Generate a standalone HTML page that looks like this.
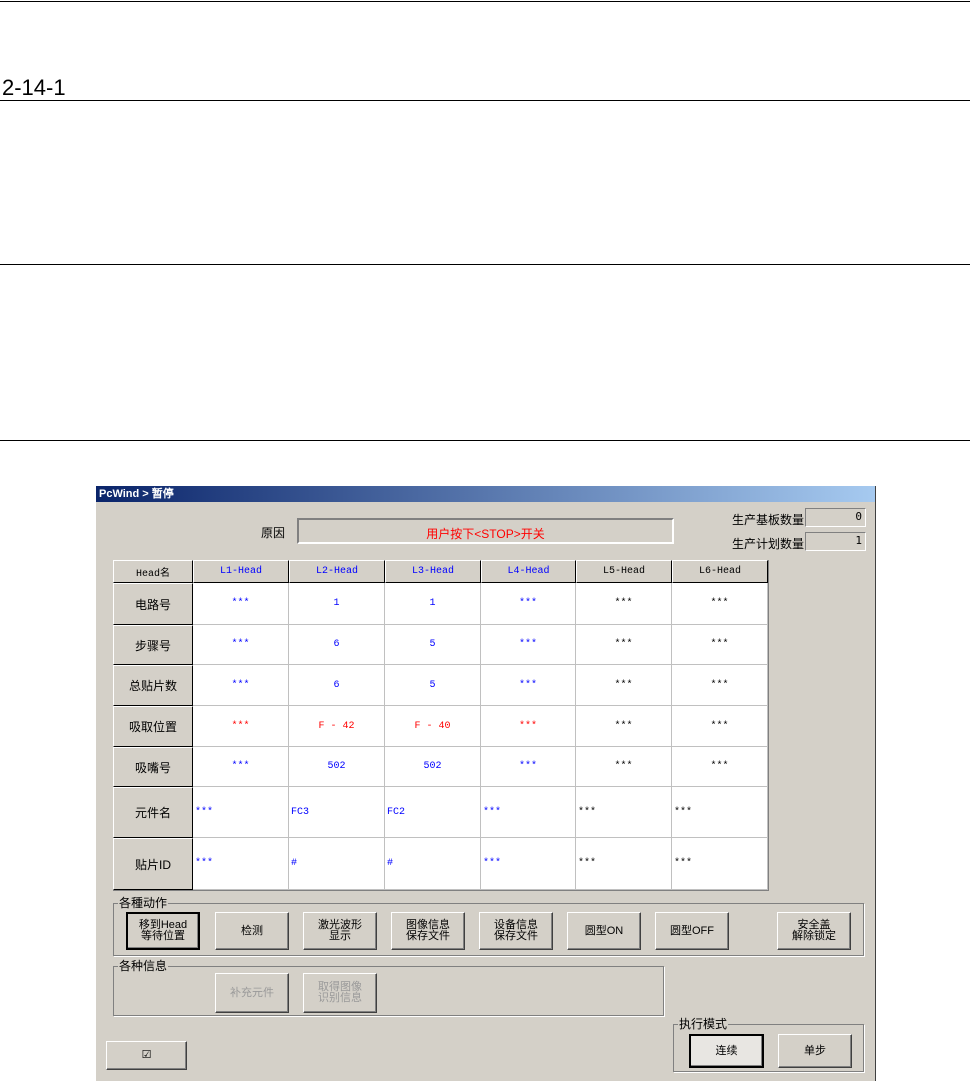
<!DOCTYPE html>
<html><head><meta charset="utf-8"><style>
body{margin:0;width:970px;height:1081px;background:#fff;position:relative;overflow:hidden;font-family:"Liberation Sans","WenQuanYi Zen Hei",sans-serif}
.a{position:absolute}
.hl{position:absolute;left:0;width:970px;height:1px;background:#000}
.win{position:absolute;left:95px;top:486px;width:779px;height:595px;background:#d4d0c8;border-left:1px solid #fff;border-right:1px solid #404040}
.title{position:absolute;left:0;top:0;width:779px;height:16px;background:linear-gradient(90deg,#0a246a,#a6caf0);color:#fff;font:bold 11px "WenQuanYi Zen Hei",sans-serif;line-height:16px;padding-left:3px;box-sizing:border-box}
.c{position:absolute;box-sizing:border-box;font:10px "Liberation Mono","WenQuanYi Zen Hei",monospace;display:flex;align-items:center;justify-content:center}
.wh{background:#fff;border-right:1px solid #c0c0c0;border-bottom:1px solid #c0c0c0}
.hd{background:#d4d0c8;border-right:1px solid #000;border-bottom:1px solid #000;border-left:1px solid #fff;border-top:1px solid #fff}
.lb{font:12px "WenQuanYi Zen Hei",sans-serif}
.b{color:#00f}.r{color:#f00}.k{color:#000}
.L{justify-content:flex-start;padding-left:2px}
.btn{position:absolute;box-sizing:border-box;background:#d4d0c8;border:1px solid;border-color:#fff #404040 #404040 #fff;box-shadow:inset -1px -1px #808080;font:11px/11px "WenQuanYi Zen Hei",sans-serif;display:flex;align-items:center;justify-content:center;text-align:center}
.grp{position:absolute;box-sizing:border-box;border:1px solid #808080;box-shadow:1px 1px #fff}
.gl{position:absolute;background:#d4d0c8;font:12px "WenQuanYi Zen Hei",sans-serif;line-height:12px;padding:0 1px}
.sunk{position:absolute;box-sizing:border-box;border:1px solid;border-color:#808080 #fff #fff #808080}
</style></head><body>
<div class="hl" style="top:1px"></div>
<div class="a" style="left:2px;top:75px;font-size:22px">2-14-1</div>
<div class="hl" style="top:100px"></div>
<div class="hl" style="top:264px"></div>
<div class="hl" style="top:440px"></div>

<div class="win">
<div class="title">PcWind &gt; 暂停</div>
<div class="a lb" style="left:165px;top:38px;font-size:12px">原因</div>
<div class="sunk" style="left:201px;top:32px;width:377px;height:26px;border-width:2px;border-color:#808080 #fff #fff #808080"></div>
<div class="a" style="left:201px;top:39px;width:377px;text-align:center;color:#f00;font:12px 'WenQuanYi Zen Hei',sans-serif">用户按下&lt;STOP&gt;开关</div>
<div class="a lb" style="left:636px;top:25px">生产基板数量</div>
<div class="a lb" style="left:636px;top:49px">生产计划数量</div>
<div class="sunk" style="left:709px;top:22px;width:61px;height:19px"></div>
<div class="a" style="left:709px;top:24px;width:57px;text-align:right;font:11px monospace">0</div>
<div class="sunk" style="left:709px;top:46px;width:61px;height:19px"></div>
<div class="a" style="left:709px;top:48px;width:57px;text-align:right;font:11px monospace">1</div>

<div class="a" style="left:17px;top:74px;width:656px;height:331px;background:#fff;border:1px solid #808080;box-sizing:border-box"></div>

<div class="grp" style="left:17px;top:417px;width:751px;height:53px"></div>
<div class="gl" style="left:22px;top:411px">各種动作</div>
<div class="btn" style="left:30px;top:426px;width:74px;height:38px;border:2px solid #000">移到Head<br>等待位置</div>
<div class="btn" style="left:119px;top:426px;width:74px;height:38px">检测</div>
<div class="btn" style="left:207px;top:426px;width:74px;height:38px">激光波形<br>显示</div>
<div class="btn" style="left:295px;top:426px;width:74px;height:38px">图像信息<br>保存文件</div>
<div class="btn" style="left:383px;top:426px;width:74px;height:38px">设备信息<br>保存文件</div>
<div class="btn" style="left:471px;top:426px;width:74px;height:38px">圆型ON</div>
<div class="btn" style="left:559px;top:426px;width:74px;height:38px">圆型OFF</div>
<div class="btn" style="left:681px;top:426px;width:74px;height:38px">安全盖<br>解除锁定</div>

<div class="grp" style="left:17px;top:480px;width:551px;height:50px"></div>
<div class="gl" style="left:22px;top:474px">各种信息</div>
<div class="btn" style="left:119px;top:487px;width:74px;height:40px;color:#999">补充元件</div>
<div class="btn" style="left:207px;top:487px;width:74px;height:40px;color:#999">取得图像<br>识别信息</div>

<div class="btn" style="left:10px;top:555px;width:81px;height:29px">☑</div>
<div class="grp" style="left:577px;top:538px;width:191px;height:48px"></div>
<div class="gl" style="left:582px;top:532px">执行模式</div>
<div class="btn" style="left:593px;top:548px;width:75px;height:34px;border:2px solid #000;background:#e8e6e2">连续</div>
<div class="btn" style="left:682px;top:548px;width:74px;height:34px">单步</div>
</div>

<script>
var X=[112,192,288,384,480,575,671,767],Y=[560,583,625,665,706,747,787,838,890];
var lab=["Head名","电路号","步骤号","总贴片数","吸取位置","吸嘴号","元件名","贴片ID"];
var hd=["L1-Head","L2-Head","L3-Head","L4-Head","L5-Head","L6-Head"];
var d=[
[["***","b"],["1","b"],["1","b"],["***","b"],["***","k"],["***","k"]],
[["***","b"],["6","b"],["5","b"],["***","b"],["***","k"],["***","k"]],
[["***","b"],["6","b"],["5","b"],["***","b"],["***","k"],["***","k"]],
[["***","r"],["F - 42","r"],["F - 40","r"],["***","r"],["***","k"],["***","k"]],
[["***","b"],["502","b"],["502","b"],["***","b"],["***","k"],["***","k"]],
[["***","b L"],["FC3","b L"],["FC2","b L"],["***","b L"],["***","k L"],["***","k L"]],
[["***","b L"],["#","b L"],["#","b L"],["***","b L"],["***","k L"],["***","k L"]]];
var h="";
function cell(x,y,w,hh,cls,t){h+='<div class="c '+cls+'" style="left:'+(x-95)+'px;top:'+(y-486)+'px;width:'+w+'px;height:'+hh+'px">'+t+'</div>';}
for(var r=0;r<8;r++){
 cell(X[0],Y[r],X[1]-X[0],Y[r+1]-Y[r],"hd"+(r?" lb":""),lab[r]);
 for(var c=0;c<6;c++){
  if(r==0)cell(X[c+1],Y[0],X[c+2]-X[c+1],Y[1]-Y[0],"hd "+(c<4?"b":"k"),hd[c]);
  else cell(X[c+1],Y[r],X[c+2]-X[c+1],Y[r+1]-Y[r],"wh "+d[r-1][c][1],d[r-1][c][0]);
 }}
document.querySelector('.win').insertAdjacentHTML('beforeend',h);
</script>
</body></html>
